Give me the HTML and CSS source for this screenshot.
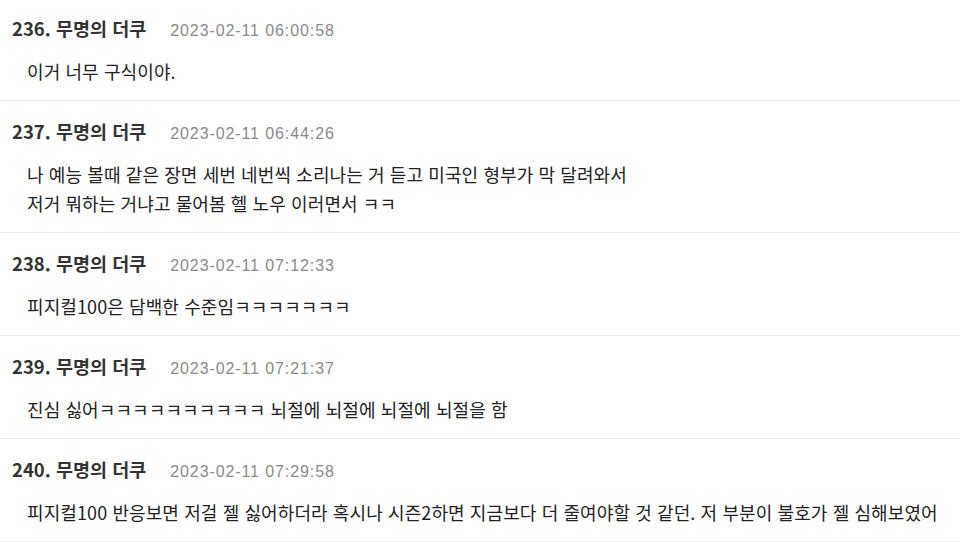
FILE: index.html
```html
<!DOCTYPE html>
<html lang="ko">
<head>
<meta charset="utf-8">
<link rel="stylesheet" href="styles.css">
</head>
<body>
<ul class="comments">
  <li class="comment">
    <div class="meta"><span class="author">236. 무명의 더쿠</span><span class="date">2023-02-11 06:00:58</span></div>
    <div class="body">이거 너무 구식이야.</div>
  </li>
  <li class="comment">
    <div class="meta"><span class="author">237. 무명의 더쿠</span><span class="date">2023-02-11 06:44:26</span></div>
    <div class="body">나 예능 볼때 같은 장면 세번 네번씩 소리나는 거 듣고 미국인 형부가 막 달려와서<br>저거 뭐하는 거냐고 물어봄 헬 노우 이러면서 ㅋㅋ</div>
  </li>
  <li class="comment">
    <div class="meta"><span class="author">238. 무명의 더쿠</span><span class="date">2023-02-11 07:12:33</span></div>
    <div class="body">피지컬100은 담백한 수준임ㅋㅋㅋㅋㅋㅋㅋ</div>
  </li>
  <li class="comment">
    <div class="meta"><span class="author">239. 무명의 더쿠</span><span class="date">2023-02-11 07:21:37</span></div>
    <div class="body">진심 싫어ㅋㅋㅋㅋㅋㅋㅋㅋㅋㅋ 뇌절에 뇌절에 뇌절에 뇌절을 함</div>
  </li>
  <li class="comment">
    <div class="meta"><span class="author">240. 무명의 더쿠</span><span class="date">2023-02-11 07:29:58</span></div>
    <div class="body">피지컬100 반응보면 저걸 젤 싫어하더라 혹시나 시즌2하면 지금보다 더 줄여야할 것 같던. 저 부분이 불호가 젤 심해보였어</div>
  </li>
</ul>
</body>
</html>
```
FILE: styles.css
```css
html, body {
  margin: 0;
  padding: 0;
  background: #fff;
}
body {
  font-family: "Noto Sans CJK KR", "Noto Sans", sans-serif;
  color: #222;
  overflow: hidden;
}
.comments {
  list-style: none;
  margin: -2px 0 0 0;
  padding: 0;
}
.comment {
  padding: 18px 12px 14.5px 12px;
  border-bottom: 1px solid #e9e9e9;
}
.meta {
  display: flex;
  align-items: baseline;
  gap: 24px;
  height: 24px;
  line-height: 24px;
}
.author {
  font-size: 18.5px;
  font-weight: bold;
  color: #333;
}
.date {
  font-family: "Liberation Sans", "Noto Sans CJK KR", sans-serif;
  font-size: 16px;
  letter-spacing: 0.9px;
  color: #8a8a8a;
}
.body {
  margin-top: 17px;
  padding-left: 15px;
  font-size: 18px;
  letter-spacing: 0.1px;
  line-height: 28.5px;
  color: #222;
  white-space: nowrap;
}
```
